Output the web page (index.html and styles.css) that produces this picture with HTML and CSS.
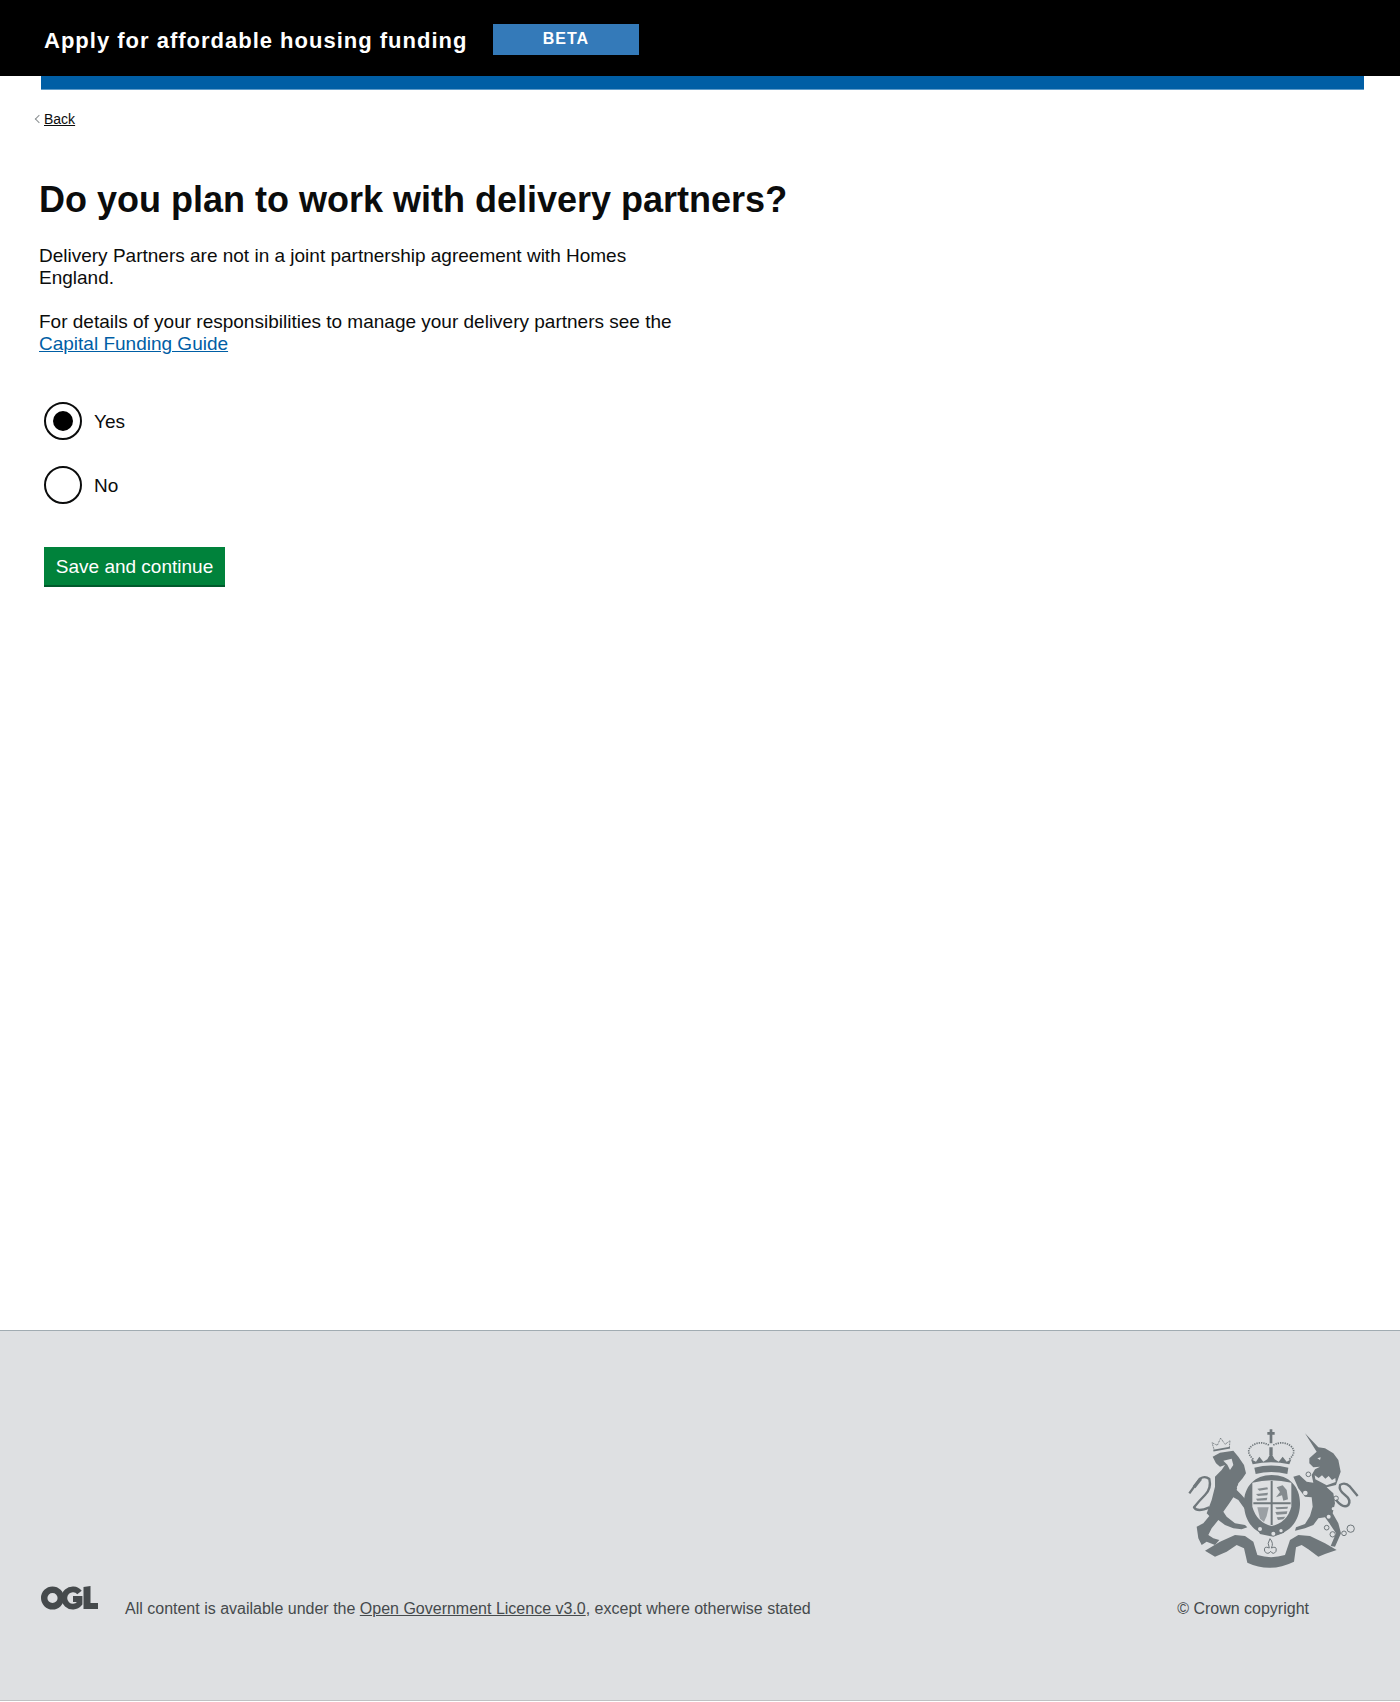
FILE: index.html

```html
<!DOCTYPE html>
<html lang="en">
  <head>
    <meta charset="utf-8" />
    <title>Do you plan to work with delivery partners?</title>
    <link rel="stylesheet" href="styles.css">
  </head>
  <body>
    <!-- header -->
    <header class="header">
      <span class="service-name">Apply for affordable housing funding</span>
      <strong class="beta-tag">BETA</strong>
    </header>
    <div class="header-bar"></div>

    <!-- page content -->
    <main class="main">
      <a class="back-link" href="#">Back</a>
      <h1 class="title">Do you plan to work with delivery partners?</h1>
      <div class="intro">
        <p>Delivery Partners are not in a joint partnership agreement with Homes England.</p>
        <p>For details of your responsibilities to manage your delivery partners see the <a href="#">Capital Funding Guide</a></p>
      </div>
      <form class="form" action="" method="">
        <label class="radio">
          <input type="radio" name="partners" value="yes" checked />
          <span class="radio-mark"></span>
          <span class="radio-text">Yes</span>
        </label>
        <label class="radio">
          <input type="radio" name="partners" value="no" />
          <span class="radio-mark"></span>
          <span class="radio-text">No</span>
        </label>
        <button class="button" type="button">Save and continue</button>
      </form>
    </main>

    <!-- footer -->
    <footer class="footer">
      <div class="crest-row">
        <svg class="crest" viewBox="0 0 630 570" aria-label="Royal coat of arms">
          <g fill="#6f777b">
            <!-- lion -->
            <path d="M128 140 L150 128 L190 122 L205 140 L222 165 L228 190 L218 205 L205 220 L200 240 L215 255 L228 270 L242 297 L225 298 L205 270 L190 262 L178 280 L160 305 L170 320 L195 340 L225 345 L232 352 L215 358 L190 355 L165 345 L145 330 L125 355 L115 375 L130 385 L148 390 L135 405 L110 395 L95 405 L85 385 L80 350 L100 340 L118 318 L110 310 L125 270 L135 230 L135 200 L155 180 L165 165 L150 170 L138 160 Z"/>
            <!-- crown -->
            <path d="M248 163 L243 148 L258 155 L268 140 L280 155 L292 148 L303 128 L314 148 L326 155 L338 140 L350 155 L364 148 L358 163 Q303 150 248 163 Z"/>
            <path d="M253 173 Q303 160 355 173 L352 192 Q303 180 257 192 Z"/>
            <path d="M298 112 H308 V135 H298 Z M299 78 H307 V100 H299 Z M292 66 H314 V74 H292 Z M299 58 H307 V82 H299 Z"/>
            <!-- shield and garter -->
            <path fill-rule="evenodd" d="M305 195 C360 195 392 232 390 285 C388 338 352 375 305 376 C258 375 224 338 222 285 C220 232 252 195 305 195 Z M247 218 Q303 203 364 218 L364 290 Q352 337 305 348 Q260 337 247 290 Z"/>
            <path d="M302 212 H308 V345 H302 Z M250 277 H362 V283 H250 Z"/>
            <g opacity="0.8">
              <path d="M262 236 L292 232 L294 238 L268 242 Z M258 252 L294 248 L292 256 L264 258 Z M258 266 L292 263 L290 271 L262 272 Z"/>
              <path d="M320 232 L338 226 L350 240 L354 268 L340 272 L336 256 L318 262 L330 246 Z"/>
              <path d="M262 292 H296 L290 318 L282 336 L270 326 Z" opacity="0.75"/>
              <path d="M316 292 L354 290 L352 296 L320 298 Z M316 306 L352 304 L350 312 L320 314 Z M320 322 L346 320 L340 328 L324 330 Z"/>
            </g>
            <path d="M255 345 L290 355 L335 350 L346 346 L342 368 L310 380 L270 372 Z"/>
            <!-- motto ribbon -->
            <path d="M105 422 L150 395 L195 375 L225 378 L250 395 L262 435 Q303 448 345 435 L360 390 L385 375 L420 378 L465 400 L500 420 L465 432 L445 440 L415 418 L395 405 L378 412 L372 455 Q300 490 232 458 L222 415 L200 405 L170 425 L135 440 Z"/>
            <!-- unicorn -->
            <path d="M405 70 L445 112 L465 115 L490 130 L505 150 L512 185 L505 205 L498 225 L470 232 L490 250 L495 280 L488 310 L505 340 L513 370 L495 410 L482 408 L498 370 L478 340 L465 322 L445 325 L430 345 L405 355 L375 362 L378 352 L405 342 L420 318 L428 290 L425 262 L405 260 L385 235 L370 200 L388 195 L410 215 L430 218 L425 195 L435 178 L450 170 L430 172 L418 160 L418 145 L440 125 Z"/>
          </g>
          <g fill="none" stroke="#6f777b" stroke-width="7" stroke-linejoin="round">
            <!-- tails -->
            <path d="M118 292 Q82 308 72 292 Q88 272 105 255 Q125 235 118 207 Q105 196 90 206 L58 250"/>
            <path d="M92 206 L72 232" stroke-width="10"/>
            <path d="M498 270 Q520 297 535 285 Q545 270 525 255 Q505 240 510 225 Q525 215 540 230 L563 258"/>
            <!-- crowns, beaded outlines -->
            <path d="M132 118 L126 98 L142 106 L152 84 L165 103 L180 92 L178 112" stroke-width="3" stroke-dasharray="3 2"/>
            <path d="M130 122 L180 113" stroke-width="5"/>
            <path d="M250 148 Q225 125 245 108 Q270 90 298 106 M358 148 Q382 125 362 108 Q338 90 308 106" stroke-width="5" stroke-dasharray="4 3"/>
            <!-- lily -->
            <path d="M300 386 Q312 400 304 414 Q322 406 318 424 Q310 436 302 424 Q294 436 284 424 Q280 406 298 414 Q290 400 300 386 Z" stroke-width="3"/>
            <!-- unicorn chain -->
            <circle cx="415" cy="193" r="7" stroke-width="3"/>
            <circle cx="406" cy="249" r="7" fill="#dee0e2" stroke="none"/>
            <circle cx="498" cy="265" r="7" stroke-width="3"/>
            <circle cx="470" cy="353" r="7" stroke-width="3"/>
            <circle cx="488" cy="373" r="8" stroke-width="3"/>
            <circle cx="522" cy="370" r="7" stroke-width="3"/>
            <circle cx="542" cy="356" r="11" stroke-width="3"/>
          </g>
          <!-- light details cut out of the beasts -->
          <g fill="#dee0e2">
            <path d="M160 152 L185 146 L190 165 L180 180 L172 164 Z"/>
            <path d="M205 225 L222 250 L216 252 L200 232 Z"/>
            <path d="M434 196 L446 204 L456 196 L466 206 L476 198 L486 210 L496 204 L497 216 L470 226 L436 208 Z"/>
            <path d="M442 145 L452 142 L450 150 Z"/>
            <circle cx="490" cy="296" r="5"/>
            <circle cx="476" cy="320" r="6"/>
            <circle cx="270" cy="357" r="6"/>
            <circle cx="310" cy="371" r="6"/>
            <circle cx="333" cy="362" r="5"/>
          </g>
        </svg>
      </div>
      <div class="licence-row">
        <svg class="ogl" viewBox="0 0 57 25" aria-label="OGL">
          <circle cx="11.5" cy="12" r="8.3" fill="none" stroke="#454a4c" stroke-width="6.4"/>
          <path d="M38.5 6.5 A8.6 8.6 0 1 0 38.5 17.5 V13 H32" fill="none" stroke="#454a4c" stroke-width="5.8"/>
          <path d="M42.5 1 L49.5 0 V17 H57 V23 H42.5 Z" fill="#454a4c"/>
        </svg>
        <p class="licence">All content is available under the <a href="#">Open Government Licence v3.0</a>, except where otherwise stated</p>
        <span class="copyright">© Crown copyright</span>
      </div>
    </footer>
  </body>
</html>
```

FILE: styles.css

```css
body {
  margin: 0;
  min-height: 1702px;
  display: flex;
  flex-direction: column;
  background-color: #fff;
  color: #0b0c0c;
  font-family: "Liberation Sans", Arial, sans-serif;
}

.header {
  height: 76px;
  padding-left: 44px;
  display: flex;
  align-items: center;
  background-color: #000;
  color: #fff;
}
.service-name {
  margin-top: 5px;
  font-size: 22px;
  font-weight: bold;
  letter-spacing: 1px;
}
.beta-tag {
  width: 146px;
  height: 31px;
  margin-left: 26px;
  margin-top: 3px;
  display: flex;
  justify-content: center;
  align-items: center;
  padding-bottom: 2px;
  padding-right: 1px;
  box-sizing: border-box;
  background-color: #347ab9;
  font-size: 16px;
  letter-spacing: 1px;
}
.header-bar {
  height: 13px;
  margin: 0 36px 0 41px;
  border-bottom: 1px solid #5f9bc9;
  background-color: #005ea5;
}

.main {
  flex: 1;
  padding: 20px 39px 0;
}
.back-link {
  display: inline-block;
  margin-left: 5px;
  position: relative;
  font-size: 14px;
  line-height: 18px;
  color: #0b0c0c;
}
.back-link::before {
  content: "";
  position: absolute;
  left: -8px;
  top: 6px;
  width: 5px;
  height: 5px;
  border-left: 1px solid #8a8f91;
  border-bottom: 1px solid #8a8f91;
  transform: rotate(45deg);
}
.title {
  margin: 50px 0 0;
  font-size: 36px;
  line-height: 44px;
}
.intro {
  width: 640px;
  margin-top: 23px;
  font-size: 19px;
  line-height: 22px;
}
.intro p {
  margin: 0 0 22px;
}
.intro a {
  color: #005ea5;
}

.form {
  margin: 47px 0 0 5px;
}
.radio {
  display: flex;
  align-items: center;
  height: 38px;
  margin-bottom: 26px;
  font-size: 19px;
}
.radio input {
  position: absolute;
  opacity: 0;
}
.radio-mark {
  width: 38px;
  height: 38px;
  margin-right: 12px;
  box-sizing: border-box;
  border: 2px solid #0b0c0c;
  border-radius: 50%;
  display: flex;
  justify-content: center;
  align-items: center;
}
.radio input:checked + .radio-mark::after {
  content: "";
  width: 20px;
  height: 20px;
  border-radius: 50%;
  background-color: #000;
}
.radio-text {
  padding-top: 2px;
}
.button {
  display: block;
  width: 181px;
  height: 40px;
  margin-top: 43px;
  padding: 0;
  border: none;
  box-shadow: inset 0 -2px 0 #005a2c;
  background-color: #00823b;
  color: #fff;
  font-family: inherit;
  font-size: 19px;
}

.footer {
  height: 371px;
  margin-bottom: 1px;
  box-sizing: border-box;
  border-top: 1px solid #a1acb2;
  border-bottom: 1px solid #bfc1c3;
  background-color: #dee0e2;
  color: #454a4c;
  font-size: 16px;
}
.crest-row {
  display: flex;
  justify-content: flex-end;
  padding: 79px 20px 0 0;
}
.crest {
  width: 210px;
  height: 190px;
  display: block;
}
.licence-row {
  display: flex;
  align-items: flex-start;
  margin-top: -13px;
  padding: 0 91px 0 41px;
}
.ogl {
  width: 57px;
  height: 25px;
  margin-top: -1px;
}
.licence {
  flex: 1;
  margin: 13px 0 0 27px;
}
.licence a {
  color: #454a4c;
}
.copyright {
  margin-top: 13px;
}
```
